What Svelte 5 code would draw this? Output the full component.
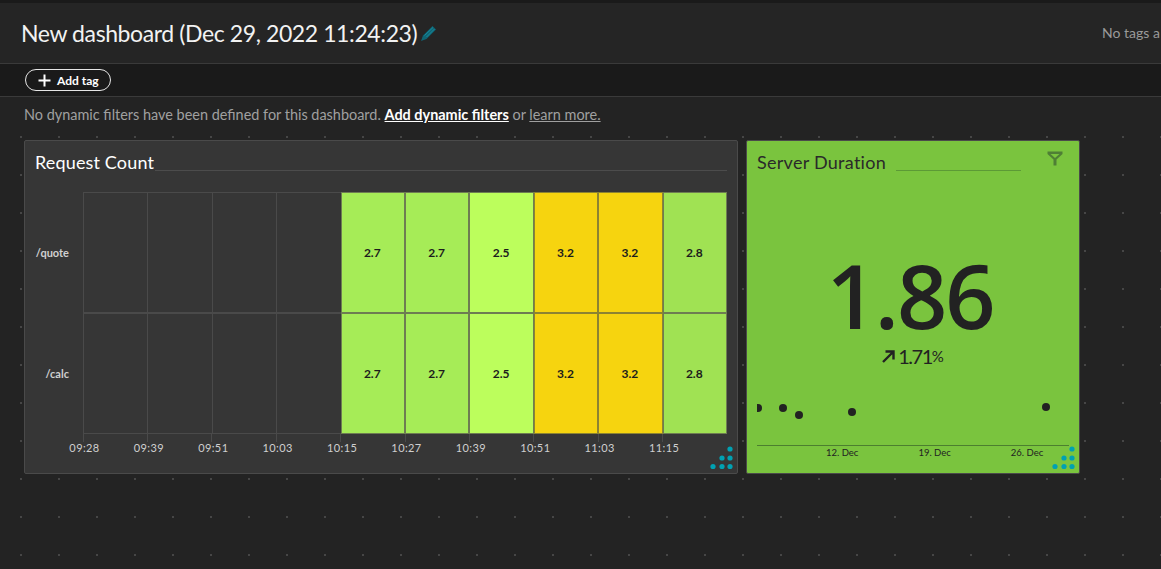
<script lang="ts">
	const cols = ['09:28', '09:39', '09:51', '10:03', '10:15', '10:27', '10:39', '10:51', '11:03', '11:15'];
	const series = [
		{ name: '/quote', values: [null, null, null, null, 2.7, 2.7, 2.5, 3.2, 3.2, 2.8] },
		{ name: '/calc', values: [null, null, null, null, 2.7, 2.7, 2.5, 3.2, 3.2, 2.8] }
	];
	const sparkPoints = [
		[1, 18],
		[26, 18],
		[42, 25],
		[95, 22],
		[289, 17]
	];

	function tone(v: number | null, i: number) {
		if (v === null) return 'empty';
		if (v >= 3) return 'warn';
		if (v === 2.5) return 'bright';
		if (i === 9) return 'soft';
		return 'ok';
	}
</script>

{#snippet resizer()}
	<svg class="resizer" width="26" height="26" viewBox="0 0 26 26">
		{#each [[21, 3], [13, 12], [21, 12], [4, 20.5], [13, 20.5], [21, 20.5]] as [cx, cy]}
			<circle {cx} {cy} r="2.6" />
		{/each}
	</svg>
{/snippet}

<div class="page">
	<header class="head">
		<div class="titleRow">
			<h1>New dashboard (Dec 29, 2022 11:24:23)</h1>
			<svg class="pencil" width="17" height="17" viewBox="0 0 17 17">
				<path d="M1 16 L3 10.5 L12.5 1 L16 4.5 L6.5 14 Z" fill="#0f6473" />
				<path d="M4.5 10.5 L13 2.5 M6.5 12 L14.5 4" stroke="#1a8a9c" stroke-width="1" />
			</svg>
		</div>
		<span class="noTags">No tags a</span>
	</header>

	<div class="tagBar">
		<button class="addTag">
			<svg width="13" height="13" viewBox="0 0 13 13">
				<path d="M6.5 0.5v12M0.5 6.5h12" stroke="#fff" stroke-width="2" />
			</svg>
			Add tag
		</button>
	</div>

	<p class="filters">
		No dynamic filters have been defined for this dashboard.
		<a class="strong" href="#add">Add dynamic filters</a> or <a href="#learn">learn more.</a>
	</p>

	<main class="board">
		<div class="tiles">
			<section class="tile heat">
				<div class="tileHead">
					<h2>Request Count</h2>
					<span class="rule"></span>
				</div>
				<div class="chart">
					<div class="yAxis">
						{#each series as s}
							<span>{s.name}</span>
						{/each}
					</div>
					<div class="plot">
						{#each series as s}
							{#each s.values as v, i}
								<div class="cell {tone(v, i)}">{v ?? ''}</div>
							{/each}
						{/each}
					</div>
					<div class="xAxis">
						{#each cols as c}
							<div class="tick"><span>{c}</span></div>
						{/each}
					</div>
				</div>
				{@render resizer()}
			</section>

			<section class="tile single">
				<div class="tileHead">
					<h2>Server Duration</h2>
					<span class="rule"></span>
					<svg class="funnel" width="16" height="15" viewBox="0 0 16 15">
						<path d="M0.5 0.5h15v2.4L9.5 8.5v6h-3v-6L0.5 2.9z M3.5 3l4.5 4 4.5-4z" fill="#4f7f35" fill-rule="evenodd" />
					</svg>
				</div>
				<div class="value">1.86</div>
				<div class="delta">
					<svg width="13" height="13" viewBox="0 0 13 13">
						<path d="M1 12L11 2M3.5 1.5h8v8" fill="none" stroke="#222" stroke-width="2.4" />
					</svg>
					<span class="pct">1.71</span><span class="unit">%</span>
				</div>
				<svg class="spark" width="312" height="55" viewBox="0 0 312 55">
					{#each sparkPoints as [cx, cy]}
						<circle {cx} {cy} r="4" fill="#222" />
					{/each}
				</svg>
				<div class="sparkAxis">
					<span>12. Dec</span>
					<span>19. Dec</span>
					<span>26. Dec</span>
				</div>
				{@render resizer()}
			</section>
		</div>
	</main>
</div>

<style>
	:global(body) {
		background: #232323;
		font-family: 'Lato', 'Open Sans', sans-serif;
		overflow: hidden;
	}

	.page {
		height: 569px;
		display: flex;
		flex-direction: column;
		border-top: 3px solid #1a1a1a;
		box-sizing: border-box;
	}

	.head {
		height: 61px;
		padding-left: 21px;
		background: #252525;
		border-bottom: 1px solid #3a3a3a;
		box-sizing: border-box;
		display: flex;
		justify-content: space-between;
		align-items: center;
		flex-shrink: 0;
		overflow: hidden;
	}

	.titleRow {
		display: flex;
		align-items: center;
		gap: 3px;
	}

	h1 {
		margin: 0;
		font-size: 23px;
		font-weight: 400;
		letter-spacing: -0.4px;
		color: #f2f2f2;
	}

	.noTags {
		color: #9a9a9a;
		font-size: 14px;
		white-space: nowrap;
		width: 59px;
		overflow: hidden;
		margin-top: -2px;
	}

	.tagBar {
		height: 33px;
		padding-left: 25px;
		background: #1a1a1a;
		border-bottom: 1px solid #3a3a3a;
		box-sizing: border-box;
		display: flex;
		align-items: center;
		flex-shrink: 0;
	}

	.addTag {
		height: 22px;
		width: 86px;
		padding: 0 0 0 12px;
		display: flex;
		align-items: center;
		gap: 6px;
		background: transparent;
		border: 1px solid #e6e6e6;
		border-radius: 11px;
		color: #fff;
		font: 700 12px 'Lato', sans-serif;
		box-sizing: border-box;
	}

	.filters {
		margin: 0;
		height: 39px;
		padding: 9px 0 0 24px;
		box-sizing: border-box;
		font-size: 14.45px;
		color: #a0a0a0;
		flex-shrink: 0;
	}

	.filters a {
		color: #a0a0a0;
	}

	.filters a.strong {
		color: #fff;
		font-weight: 700;
	}

	.board {
		flex: 1;
		padding: 4px 0 0 24px;
		background-color: #232323;
		background-image: conic-gradient(from 0deg at 2px 2px, transparent 75%, #464646 0);
		background-size: 38px 38px;
		background-position: 20px 0;
	}

	.tiles {
		display: flex;
		gap: 8px;
		align-items: flex-start;
	}

	.tile {
		position: relative;
		height: 334px;
		box-sizing: border-box;
		border: 1px solid #4a4a4a;
		border-radius: 2px;
	}

	.heat {
		width: 714px;
		background: #363636;
	}

	.single {
		width: 334px;
		background: #7ac43e;
		color: #222;
		display: flex;
		flex-direction: column;
	}

	.tileHead {
		height: 20px;
		margin: 10px 10px 0;
		display: flex;
		align-items: flex-end;
	}

	h2 {
		margin: 0 0 -3px;
		font-size: 18px;
		font-weight: 400;
		line-height: 24px;
		letter-spacing: 0.15px;
		color: #fff;
	}

	.single h2 {
		color: #2a2a2a;
		letter-spacing: 0.27px;
	}

	.rule {
		flex: 1;
		height: 1px;
		margin-left: 1px;
		background: #4c4c4c;
	}

	.single .rule {
		flex: none;
		width: 125px;
		margin-left: 10px;
		background: #5c9a36;
	}

	.funnel {
		margin-left: 26px;
		align-self: flex-start;
	}

	.chart {
		display: grid;
		grid-template-columns: 58px 644px;
		grid-template-rows: 242px auto;
		margin-top: 21px;
	}

	.yAxis {
		display: grid;
		grid-template-rows: 1fr 1fr;
		justify-items: end;
		padding-right: 14px;
		font-size: 11px;
		font-weight: 700;
		color: #d0d0d0;
	}

	.yAxis span {
		margin-top: 54px;
	}

	.plot {
		display: grid;
		grid-template-columns: repeat(10, 1fr);
		grid-template-rows: 1fr 1fr;
	}

	.cell {
		display: flex;
		align-items: center;
		justify-content: center;
		padding-right: 1px;
		font-size: 12px;
		font-weight: 700;
		color: #1c1c1c;
		box-sizing: border-box;
		border: 1px solid #6e7d52;
	}

	.cell.empty {
		border: 0;
		border-left: 1px solid #4a4a4a;
		border-top: 1px solid #4a4a4a;
		box-shadow: inset 0 -1px 0 #4a4a4a;
	}

	.ok {
		background: #a6ec57;
	}
	.soft {
		background: #a0e253;
	}
	.bright {
		background: #bcfe5c;
	}
	.warn {
		background: #f6d40f;
		border-color: #8c8332;
	}

	.xAxis {
		grid-column: 2;
		display: grid;
		grid-template-columns: repeat(10, 1fr);
		font-size: 11px;
		letter-spacing: 0.4px;
		color: #d0d0d0;
	}

	.tick {
		width: 0;
		display: flex;
		flex-direction: column;
		align-items: center;
	}

	.tick::before {
		content: '';
		flex-shrink: 0;
		width: 1px;
		height: 8px;
		background: #4a4a4a;
	}

	.tick span {
		white-space: nowrap;
		margin: -1px 0 0 3px;
	}

	.value {
		margin-top: 80px;
		padding-right: 6px;
		text-align: center;
		font-family: 'Open Sans', sans-serif;
		font-size: 88px;
		line-height: 89px;
		font-weight: 600;
		letter-spacing: -2px;
	}

	.delta {
		display: flex;
		justify-content: center;
		align-items: center;
		height: 28px;
		gap: 3px;
		margin-top: 2px;
	}

	.pct {
		font-size: 20px;
		letter-spacing: -1.5px;
	}

	.unit {
		font-size: 15px;
		margin-left: -3px;
	}

	.spark {
		margin: 20px 0 0 10px;
		display: block;
	}

	.sparkAxis {
		margin: 0 10px;
		height: 20px;
		border-top: 1px solid #4c7f2f;
		display: flex;
		font-size: 9.5px;
		padding-left: 69px;
		gap: 60px;
		line-height: 14px;
	}

	.resizer {
		position: absolute;
		right: 2px;
		bottom: 1px;
	}

	.resizer circle {
		fill: #00a1b2;
	}
</style>
